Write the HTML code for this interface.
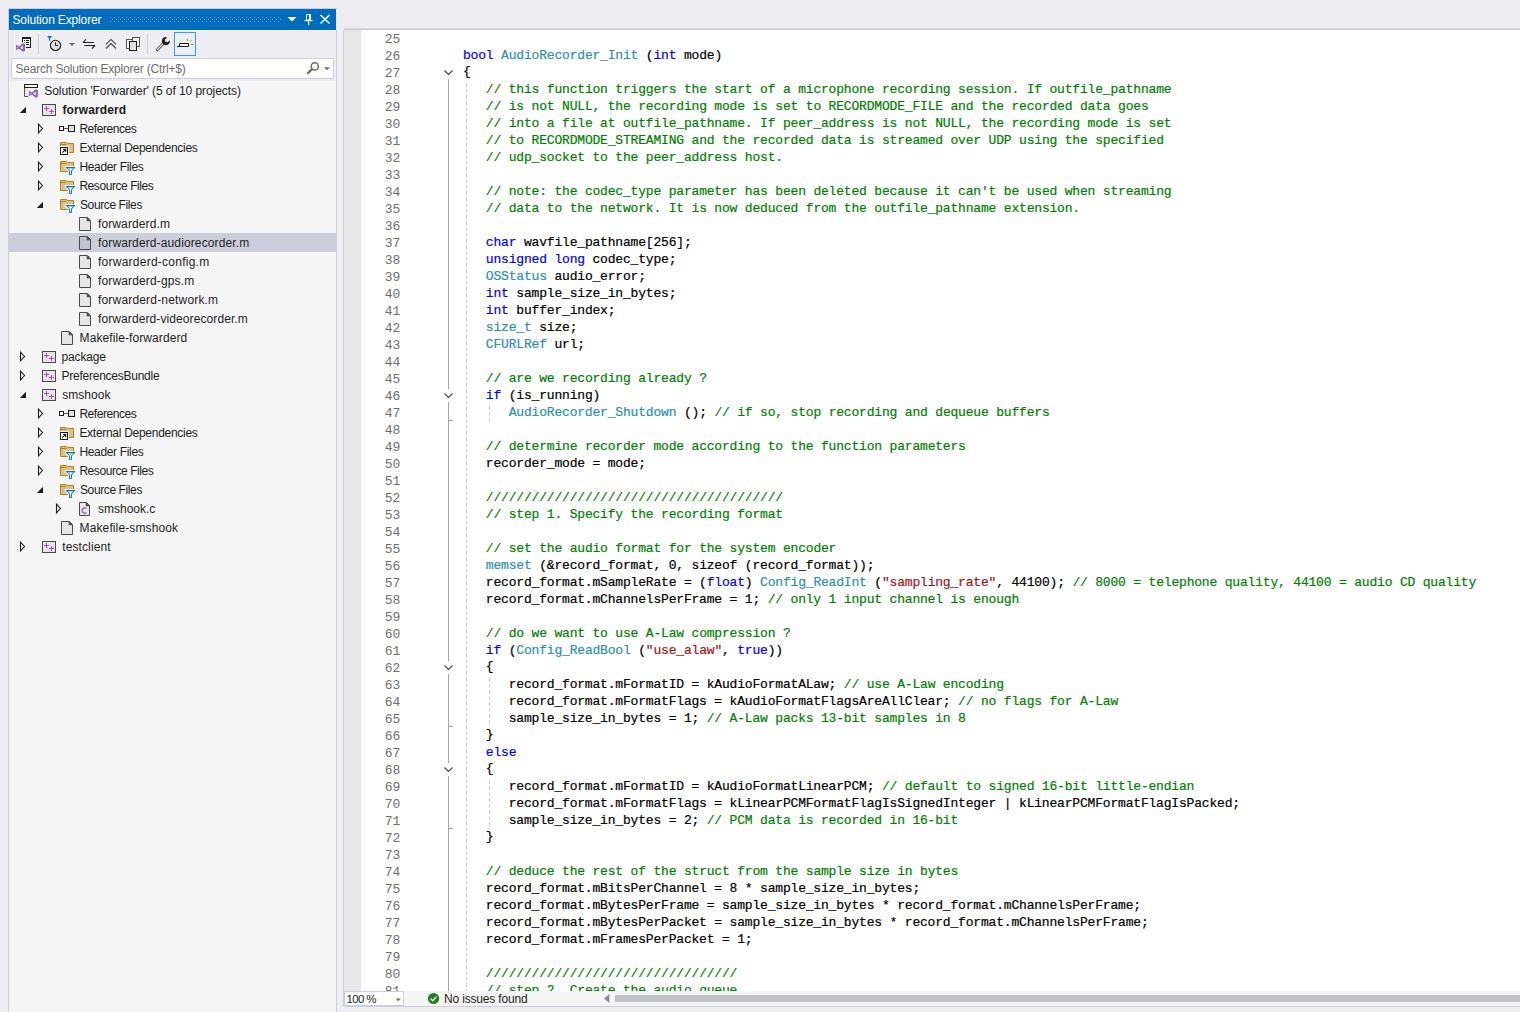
<!DOCTYPE html>
<html><head><meta charset="utf-8"><title>Solution Explorer</title>
<style>
html,body{margin:0;padding:0}
body{width:1520px;height:1012px;background:#eeeef2;position:relative;overflow:hidden;font-family:"Liberation Sans",sans-serif;font-size:12px;color:#1e1e1e}
.abs{position:absolute}
#panel{position:absolute;left:8px;top:8px;width:327px;height:1010px;border:1px solid #cccedb;background:#eeeef2}
#title{position:absolute;left:9px;top:9px;width:327px;height:21px;background:#006cbe}
#title .t{position:absolute;left:3.5px;top:1px;line-height:21px;color:#fff;white-space:pre}
#search{position:absolute;left:11px;top:58px;width:321px;height:19px;border:1px solid #cccedb;background:#fff}
#search .t{position:absolute;left:3.4px;top:1px;line-height:19px;color:#6d6d6d;white-space:pre}
#tree{position:absolute;left:9px;top:81px;width:327px;height:931px;background:#f5f5f5}
.row{position:absolute;left:0;width:327px;height:19px}
.row.sel{background:#cccedb}
.row .lbl{position:absolute;top:1px;line-height:18px;white-space:pre;color:#1e1e1e}
.row svg{position:absolute}
#edtop{position:absolute;left:344px;top:28px;width:1176px;height:2px;background:linear-gradient(#d6d7e4 0,#d6d7e4 50%,#c6c8da 50%,#c6c8da 100%)}
#edleft{position:absolute;left:343px;top:30px;width:1px;height:977px;background:#cccedb}
#edbg{position:absolute;left:344px;top:30px;width:1176px;height:961px;background:#fff;overflow:hidden}
#margin{position:absolute;left:0;top:0;width:17px;height:961px;background:#e6e7e8}
#bottombar{position:absolute;left:344px;top:991px;width:1176px;height:15px;background:#f5f5f5}
#edbot{position:absolute;left:343px;top:1006px;width:1177px;height:1px;background:#cccedb}
.ln,.cl{position:absolute;height:17px;line-height:17px;white-space:pre;font-family:"Liberation Mono",monospace;font-size:13px}
.ln{left:0;width:56px;text-align:right;color:#6e6e6e;letter-spacing:-0.2px}
.cl{left:119px;color:#000;letter-spacing:-0.1846px;-webkit-text-stroke:0.2px currentColor}
.k{color:#0000ff}.t{color:#2b91af}.c{color:#008000}.s{color:#a31515}
</style></head>
<body>
<div id="panel"></div><div class="abs" style="left:336px;top:9px;width:1px;height:21px;background:#eee8ee"></div>
<div id="title"><span class="t" style="letter-spacing:-0.149px">Solution Explorer</span><svg class="abs" style="left:0;top:0" width="327" height="21" viewBox="9 9 327 21"><defs><pattern id="grip" x="110" y="17" width="4" height="4" patternUnits="userSpaceOnUse"><rect x="0" y="0" width="1" height="1" fill="#59a8de"/><rect x="2" y="2" width="1" height="1" fill="#59a8de"/></pattern></defs><rect x="110" y="17" width="171" height="5" fill="url(#grip)"/><path d="M287.5 17 H296.5 L292 21.5 Z" fill="#fff"/><path d="M306.5 14.5 H310.5 V20 H306.5 Z" fill="none" stroke="#fff" stroke-width="1"/><rect x="309" y="14" width="1.5" height="6" fill="#fff"/><rect x="304.5" y="20" width="8" height="1.2" fill="#fff"/><rect x="308" y="21" width="1.2" height="4.2" fill="#fff"/><path d="M320.5 15 L329.5 23.4 M329.5 15 L320.5 23.4" stroke="#fff" stroke-width="1.4" fill="none"/></svg></div>
<svg class="abs" style="left:9px;top:30px" width="327" height="28" viewBox="9 30 327 28"><rect x="9" y="30" width="327" height="1" fill="#f7f3f1"/><path d="M22 37 H31 V48 H26 V47 H30 V39 H23 V43 H22 Z" fill="#1e1e1e"/><rect x="23" y="39" width="7" height="8" fill="#fff"/><rect x="24" y="40" width="1" height="1" fill="#1e1e1e"/><rect x="26" y="40" width="3" height="1" fill="#1e1e1e"/><rect x="24" y="42" width="1" height="1" fill="#555"/><rect x="26" y="42" width="3" height="1" fill="#1e1e1e"/><rect x="26" y="44" width="3" height="1" fill="#1e1e1e"/><rect x="15" y="42.5" width="11" height="10" fill="#eeeef2" opacity="0"/><g transform="translate(16 43.2) scale(1)"><path d="M6.9 0 L9 0.9 V7.7 L6.9 8.6 L2.9 5.2 L1 6.9 L0 6.4 V2.2 L1 1.7 L2.9 3.4 Z" fill="#eeeef2" stroke="#eeeef2" stroke-width="2"/><path d="M6.9 0 L9 0.9 V7.7 L6.9 8.6 L2.9 5.2 L1 6.9 L0 6.4 V2.2 L1 1.7 L2.9 3.4 Z M6.9 2.4 L4.3 4.3 L6.9 6.2 Z M1 3.3 V5.3 L2.1 4.3 Z" fill="#8661c5" fill-rule="evenodd"/></g><rect x="38" y="34" width="1" height="20" fill="#cccedb"/><rect x="147" y="34" width="1" height="20" fill="#cccedb"/><path d="M47 36 H52.2 L50.2 38.2 V40.8 H49 V38.2 Z" fill="#0b6cc2"/><circle cx="55.5" cy="45.4" r="5.1" fill="#e4e4e4" stroke="#1e1e1e" stroke-width="1.1"/><path d="M55.5 42.3 V45.6 H58.2" fill="none" stroke="#1e1e1e" stroke-width="1"/><path d="M69 43 H75 L72 46 Z" fill="#6d6d6d"/><path d="M86 39.3 L83.1 42.5 H94 M84.3 45.5 H95 L92 48.6" fill="none" stroke="#1e1e1e" stroke-width="1.1" stroke-linejoin="bevel"/><path d="M106 44.3 L111 39.4 L116 44.3 M106 48.5 L111 43.6 L116 48.5" fill="none" stroke="#424242" stroke-width="1.1"/><rect x="126.5" y="39.5" width="7" height="9" fill="#f4f4f4" stroke="#555" stroke-width="1"/><rect x="132.5" y="37.5" width="7" height="9" fill="#f0f0f0" stroke="#555" stroke-width="1"/><rect x="129.5" y="41.5" width="7" height="9" fill="#e2e2e2" stroke="#1e1e1e" stroke-width="1"/><path d="M157.3 49.7 L164 42.8" stroke="#4a4a4a" stroke-width="2.7" stroke-linecap="round" fill="none"/><path d="M157.4 49.6 L163.6 43.2" stroke="#f4f4f4" stroke-width="1.1" stroke-linecap="round" fill="none"/><path d="M167.2 37.2 A4.1 4.1 0 1 0 169.9 40.2 L167.6 42.3 L165.3 41.7 L164.9 39.5 Z" fill="#1e1e1e"/><rect x="174.5" y="32.5" width="21" height="23" fill="none" stroke="#3399ff" stroke-width="1"/><path d="M177 46.5 H188.5 V43.5 H179.5 V46.5" fill="#fff" stroke="#1e1e1e" stroke-width="1"/><path d="M187.5 39 V41 M190 41.6 L191.4 40.2 M191 44.5 H193.2" stroke="#b5830a" stroke-width="1" fill="none"/></svg>
<div id="search"><span class="t" style="letter-spacing:-0.188px">Search Solution Explorer (Ctrl+$)</span><svg class="abs" style="left:-1px;top:-1px" width="323" height="21" viewBox="11 58 323 21"><circle cx="314.8" cy="66.3" r="3.6" fill="none" stroke="#6d6d6d" stroke-width="1.5"/><path d="M312.2 69 L307.3 73.6" stroke="#6d6d6d" stroke-width="2.3" fill="none"/><path d="M324 67.2 H330 L327 70.2 Z" fill="#6d6d6d"/></svg></div>
<div id="tree">
<div class="row" style="top:0px"><svg style="left:14px;top:0" width="18" height="19" viewBox="0 0 18 19"><rect x="1.5" y="3.5" width="13" height="3" fill="#fff" stroke="#1e1e1e" stroke-width="1"/><rect x="2" y="7" width="12" height="8.5" fill="#e6e6e6"/><path d="M1.5 7 V15.5 H5" fill="none" stroke="#555" stroke-width="1"/><rect x="5.2" y="7.6" width="10.4" height="10" fill="#f5f5f5"/><g transform="translate(5.8 8.2) scale(1)"><path d="M6.9 0 L9 0.9 V7.7 L6.9 8.6 L2.9 5.2 L1 6.9 L0 6.4 V2.2 L1 1.7 L2.9 3.4 Z M6.9 2.4 L4.3 4.3 L6.9 6.2 Z M1 3.3 V5.3 L2.1 4.3 Z" fill="#8661c5" fill-rule="evenodd"/></g></svg><span class="lbl" id="r0" style="left:35.3px;letter-spacing:-0.072px">Solution &#39;Forwarder&#39; (5 of 10 projects)</span></div>
<div class="row" style="top:19px"><svg style="left:10px;top:0" width="9" height="19" viewBox="0 0 9 19"><path d="M7 6.8 V13 H0.8 Z" fill="#1e1e1e"/></svg><svg style="left:32px;top:0" width="18" height="19" viewBox="0 0 18 19"><rect x="1.5" y="4.5" width="13" height="11" fill="#e6e6e6" stroke="#4a4a4a" stroke-width="1"/><path d="M3 8.5 H8 M5.5 6 V11 M8 11.5 H13 M10.5 9 V14" stroke="#b146c2" stroke-width="1" fill="none"/></svg><span class="lbl" id="r1" style="left:53.5px;letter-spacing:0.112px;font-weight:bold">forwarderd</span></div>
<div class="row" style="top:38px"><svg style="left:28px;top:0" width="8" height="19" viewBox="0 0 8 19"><path d="M1.5 5.2 V13.8 L5.5 9.5 Z" fill="none" stroke="#1e1e1e" stroke-width="1.1"/></svg><svg style="left:49px;top:0" width="18" height="19" viewBox="0 0 18 19"><rect x="1.5" y="7.5" width="4" height="4" fill="#fff" stroke="#1e1e1e" stroke-width="1"/><rect x="6" y="9" width="4" height="1" fill="#555"/><rect x="10.5" y="6.5" width="6" height="6" fill="#e0e0e0" stroke="#1e1e1e" stroke-width="1"/></svg><span class="lbl" id="r2" style="left:70.4px;letter-spacing:-0.442px">References</span></div>
<div class="row" style="top:57px"><svg style="left:28px;top:0" width="8" height="19" viewBox="0 0 8 19"><path d="M1.5 5.2 V13.8 L5.5 9.5 Z" fill="none" stroke="#1e1e1e" stroke-width="1.1"/></svg><svg style="left:49px;top:0" width="18" height="19" viewBox="0 0 18 19"><path d="M2.5 4.5 H8.5 L9.5 5.5 H15.5 V14.5 H2.5 Z" fill="#dcc28a" stroke="#b5830a" stroke-width="1"/><path d="M3 6.5 H8.5" stroke="#b5830a" stroke-width="1"/><rect x="1" y="8" width="10" height="10" fill="#f5f5f5"/><rect x="2.5" y="9.5" width="7" height="7" fill="#fff" stroke="#1e1e1e" stroke-width="1"/><path d="M4.3 14.7 L7.6 11.4 M5 11.3 H7.7 V14" stroke="#1e1e1e" stroke-width="1.1" fill="none"/></svg><span class="lbl" id="r3" style="left:70.4px;letter-spacing:-0.284px">External Dependencies</span></div>
<div class="row" style="top:76px"><svg style="left:28px;top:0" width="8" height="19" viewBox="0 0 8 19"><path d="M1.5 5.2 V13.8 L5.5 9.5 Z" fill="none" stroke="#1e1e1e" stroke-width="1.1"/></svg><svg style="left:49px;top:0" width="19" height="19" viewBox="0 0 19 19"><path d="M2.5 4.5 H8.5 L9.5 5.5 H15.5 V14.5 H2.5 Z" fill="#dcc28a" stroke="#b5830a" stroke-width="1"/><path d="M3 6.5 H8.5" stroke="#b5830a" stroke-width="1"/><path d="M6.9 9 H18.1 V11.6 L14.9 14.6 V19 H10.1 V14.6 L6.9 11.6 Z" fill="#f5f5f5"/><rect x="14.6" y="9" width="3.4" height="7" fill="#f5f5f5"/><path d="M8.7 10.6 H16.3 L13.5 13.9 V17.5 H11.5 V13.9 Z" fill="#eef5fb" stroke="#0f73c9" stroke-width="1" stroke-linejoin="miter"/><path d="M7.9 10.6 H17.1" stroke="#0f73c9" stroke-width="1.3"/></svg><span class="lbl" id="r4" style="left:70.4px;letter-spacing:-0.330px">Header Files</span></div>
<div class="row" style="top:95px"><svg style="left:28px;top:0" width="8" height="19" viewBox="0 0 8 19"><path d="M1.5 5.2 V13.8 L5.5 9.5 Z" fill="none" stroke="#1e1e1e" stroke-width="1.1"/></svg><svg style="left:49px;top:0" width="19" height="19" viewBox="0 0 19 19"><path d="M2.5 4.5 H8.5 L9.5 5.5 H15.5 V14.5 H2.5 Z" fill="#dcc28a" stroke="#b5830a" stroke-width="1"/><path d="M3 6.5 H8.5" stroke="#b5830a" stroke-width="1"/><path d="M6.9 9 H18.1 V11.6 L14.9 14.6 V19 H10.1 V14.6 L6.9 11.6 Z" fill="#f5f5f5"/><rect x="14.6" y="9" width="3.4" height="7" fill="#f5f5f5"/><path d="M8.7 10.6 H16.3 L13.5 13.9 V17.5 H11.5 V13.9 Z" fill="#eef5fb" stroke="#0f73c9" stroke-width="1" stroke-linejoin="miter"/><path d="M7.9 10.6 H17.1" stroke="#0f73c9" stroke-width="1.3"/></svg><span class="lbl" id="r5" style="left:70.4px;letter-spacing:-0.433px">Resource Files</span></div>
<div class="row" style="top:114px"><svg style="left:27px;top:0" width="9" height="19" viewBox="0 0 9 19"><path d="M7 6.8 V13 H0.8 Z" fill="#1e1e1e"/></svg><svg style="left:49px;top:0" width="19" height="19" viewBox="0 0 19 19"><path d="M2.5 4.5 H8.5 L9.5 5.5 H15.5 V14.5 H2.5 Z" fill="#dcc28a" stroke="#b5830a" stroke-width="1"/><path d="M3 6.5 H8.5" stroke="#b5830a" stroke-width="1"/><path d="M6.9 9 H18.1 V11.6 L14.9 14.6 V19 H10.1 V14.6 L6.9 11.6 Z" fill="#f5f5f5"/><rect x="14.6" y="9" width="3.4" height="7" fill="#f5f5f5"/><path d="M8.7 10.6 H16.3 L13.5 13.9 V17.5 H11.5 V13.9 Z" fill="#eef5fb" stroke="#0f73c9" stroke-width="1" stroke-linejoin="miter"/><path d="M7.9 10.6 H17.1" stroke="#0f73c9" stroke-width="1.3"/></svg><span class="lbl" id="r6" style="left:71px;letter-spacing:-0.391px">Source Files</span></div>
<div class="row" style="top:133px"><svg style="left:69px;top:0" width="18" height="19" viewBox="0 0 18 19"><path d="M1.5 3.5 H9.5 L12.5 6.5 V16.5 H1.5 Z" fill="#e6e6e6" stroke="#4a4a4a" stroke-width="1"/><path d="M9 3.5 V7 H12.5" fill="#4a4a4a" stroke="#4a4a4a" stroke-width="0.6"/></svg><span class="lbl" id="r7" style="left:89px;letter-spacing:0.110px">forwarderd.m</span></div>
<div class="row sel" style="top:152px"><svg style="left:69px;top:0" width="18" height="19" viewBox="0 0 18 19"><path d="M1.5 3.5 H9.5 L12.5 6.5 V16.5 H1.5 Z" fill="#c3c4d2" stroke="#4a4a4a" stroke-width="1"/><path d="M9 3.5 V7 H12.5" fill="#4a4a4a" stroke="#4a4a4a" stroke-width="0.6"/></svg><span class="lbl" id="r8" style="left:89px;letter-spacing:0.125px">forwarderd-audiorecorder.m</span></div>
<div class="row" style="top:171px"><svg style="left:69px;top:0" width="18" height="19" viewBox="0 0 18 19"><path d="M1.5 3.5 H9.5 L12.5 6.5 V16.5 H1.5 Z" fill="#e6e6e6" stroke="#4a4a4a" stroke-width="1"/><path d="M9 3.5 V7 H12.5" fill="#4a4a4a" stroke="#4a4a4a" stroke-width="0.6"/></svg><span class="lbl" id="r9" style="left:89px;letter-spacing:0.249px">forwarderd-config.m</span></div>
<div class="row" style="top:190px"><svg style="left:69px;top:0" width="18" height="19" viewBox="0 0 18 19"><path d="M1.5 3.5 H9.5 L12.5 6.5 V16.5 H1.5 Z" fill="#e6e6e6" stroke="#4a4a4a" stroke-width="1"/><path d="M9 3.5 V7 H12.5" fill="#4a4a4a" stroke="#4a4a4a" stroke-width="0.6"/></svg><span class="lbl" id="r10" style="left:89px;letter-spacing:0.145px">forwarderd-gps.m</span></div>
<div class="row" style="top:209px"><svg style="left:69px;top:0" width="18" height="19" viewBox="0 0 18 19"><path d="M1.5 3.5 H9.5 L12.5 6.5 V16.5 H1.5 Z" fill="#e6e6e6" stroke="#4a4a4a" stroke-width="1"/><path d="M9 3.5 V7 H12.5" fill="#4a4a4a" stroke="#4a4a4a" stroke-width="0.6"/></svg><span class="lbl" id="r11" style="left:89px;letter-spacing:0.179px">forwarderd-network.m</span></div>
<div class="row" style="top:228px"><svg style="left:69px;top:0" width="18" height="19" viewBox="0 0 18 19"><path d="M1.5 3.5 H9.5 L12.5 6.5 V16.5 H1.5 Z" fill="#e6e6e6" stroke="#4a4a4a" stroke-width="1"/><path d="M9 3.5 V7 H12.5" fill="#4a4a4a" stroke="#4a4a4a" stroke-width="0.6"/></svg><span class="lbl" id="r12" style="left:89px;letter-spacing:0.096px">forwarderd-videorecorder.m</span></div>
<div class="row" style="top:247px"><svg style="left:51px;top:0" width="18" height="19" viewBox="0 0 18 19"><path d="M1.5 3.5 H9.5 L12.5 6.5 V16.5 H1.5 Z" fill="#e6e6e6" stroke="#4a4a4a" stroke-width="1"/><path d="M9 3.5 V7 H12.5" fill="#4a4a4a" stroke="#4a4a4a" stroke-width="0.6"/></svg><span class="lbl" id="r13" style="left:70.6px;letter-spacing:0.086px">Makefile-forwarderd</span></div>
<div class="row" style="top:266px"><svg style="left:10px;top:0" width="8" height="19" viewBox="0 0 8 19"><path d="M1.5 5.2 V13.8 L5.5 9.5 Z" fill="none" stroke="#1e1e1e" stroke-width="1.1"/></svg><svg style="left:32px;top:0" width="18" height="19" viewBox="0 0 18 19"><rect x="1.5" y="4.5" width="13" height="11" fill="#e6e6e6" stroke="#4a4a4a" stroke-width="1"/><path d="M3 8.5 H8 M5.5 6 V11 M8 11.5 H13 M10.5 9 V14" stroke="#b146c2" stroke-width="1" fill="none"/></svg><span class="lbl" id="r14" style="left:52.6px;letter-spacing:-0.163px">package</span></div>
<div class="row" style="top:285px"><svg style="left:10px;top:0" width="8" height="19" viewBox="0 0 8 19"><path d="M1.5 5.2 V13.8 L5.5 9.5 Z" fill="none" stroke="#1e1e1e" stroke-width="1.1"/></svg><svg style="left:32px;top:0" width="18" height="19" viewBox="0 0 18 19"><rect x="1.5" y="4.5" width="13" height="11" fill="#e6e6e6" stroke="#4a4a4a" stroke-width="1"/><path d="M3 8.5 H8 M5.5 6 V11 M8 11.5 H13 M10.5 9 V14" stroke="#b146c2" stroke-width="1" fill="none"/></svg><span class="lbl" id="r15" style="left:52.6px;letter-spacing:-0.255px">PreferencesBundle</span></div>
<div class="row" style="top:304px"><svg style="left:10px;top:0" width="9" height="19" viewBox="0 0 9 19"><path d="M7 6.8 V13 H0.8 Z" fill="#1e1e1e"/></svg><svg style="left:32px;top:0" width="18" height="19" viewBox="0 0 18 19"><rect x="1.5" y="4.5" width="13" height="11" fill="#e6e6e6" stroke="#4a4a4a" stroke-width="1"/><path d="M3 8.5 H8 M5.5 6 V11 M8 11.5 H13 M10.5 9 V14" stroke="#b146c2" stroke-width="1" fill="none"/></svg><span class="lbl" id="r16" style="left:53.2px;letter-spacing:0.061px">smshook</span></div>
<div class="row" style="top:323px"><svg style="left:28px;top:0" width="8" height="19" viewBox="0 0 8 19"><path d="M1.5 5.2 V13.8 L5.5 9.5 Z" fill="none" stroke="#1e1e1e" stroke-width="1.1"/></svg><svg style="left:49px;top:0" width="18" height="19" viewBox="0 0 18 19"><rect x="1.5" y="7.5" width="4" height="4" fill="#fff" stroke="#1e1e1e" stroke-width="1"/><rect x="6" y="9" width="4" height="1" fill="#555"/><rect x="10.5" y="6.5" width="6" height="6" fill="#e0e0e0" stroke="#1e1e1e" stroke-width="1"/></svg><span class="lbl" id="r17" style="left:70.4px;letter-spacing:-0.442px">References</span></div>
<div class="row" style="top:342px"><svg style="left:28px;top:0" width="8" height="19" viewBox="0 0 8 19"><path d="M1.5 5.2 V13.8 L5.5 9.5 Z" fill="none" stroke="#1e1e1e" stroke-width="1.1"/></svg><svg style="left:49px;top:0" width="18" height="19" viewBox="0 0 18 19"><path d="M2.5 4.5 H8.5 L9.5 5.5 H15.5 V14.5 H2.5 Z" fill="#dcc28a" stroke="#b5830a" stroke-width="1"/><path d="M3 6.5 H8.5" stroke="#b5830a" stroke-width="1"/><rect x="1" y="8" width="10" height="10" fill="#f5f5f5"/><rect x="2.5" y="9.5" width="7" height="7" fill="#fff" stroke="#1e1e1e" stroke-width="1"/><path d="M4.3 14.7 L7.6 11.4 M5 11.3 H7.7 V14" stroke="#1e1e1e" stroke-width="1.1" fill="none"/></svg><span class="lbl" id="r18" style="left:70.4px;letter-spacing:-0.284px">External Dependencies</span></div>
<div class="row" style="top:361px"><svg style="left:28px;top:0" width="8" height="19" viewBox="0 0 8 19"><path d="M1.5 5.2 V13.8 L5.5 9.5 Z" fill="none" stroke="#1e1e1e" stroke-width="1.1"/></svg><svg style="left:49px;top:0" width="19" height="19" viewBox="0 0 19 19"><path d="M2.5 4.5 H8.5 L9.5 5.5 H15.5 V14.5 H2.5 Z" fill="#dcc28a" stroke="#b5830a" stroke-width="1"/><path d="M3 6.5 H8.5" stroke="#b5830a" stroke-width="1"/><path d="M6.9 9 H18.1 V11.6 L14.9 14.6 V19 H10.1 V14.6 L6.9 11.6 Z" fill="#f5f5f5"/><rect x="14.6" y="9" width="3.4" height="7" fill="#f5f5f5"/><path d="M8.7 10.6 H16.3 L13.5 13.9 V17.5 H11.5 V13.9 Z" fill="#eef5fb" stroke="#0f73c9" stroke-width="1" stroke-linejoin="miter"/><path d="M7.9 10.6 H17.1" stroke="#0f73c9" stroke-width="1.3"/></svg><span class="lbl" id="r19" style="left:70.4px;letter-spacing:-0.330px">Header Files</span></div>
<div class="row" style="top:380px"><svg style="left:28px;top:0" width="8" height="19" viewBox="0 0 8 19"><path d="M1.5 5.2 V13.8 L5.5 9.5 Z" fill="none" stroke="#1e1e1e" stroke-width="1.1"/></svg><svg style="left:49px;top:0" width="19" height="19" viewBox="0 0 19 19"><path d="M2.5 4.5 H8.5 L9.5 5.5 H15.5 V14.5 H2.5 Z" fill="#dcc28a" stroke="#b5830a" stroke-width="1"/><path d="M3 6.5 H8.5" stroke="#b5830a" stroke-width="1"/><path d="M6.9 9 H18.1 V11.6 L14.9 14.6 V19 H10.1 V14.6 L6.9 11.6 Z" fill="#f5f5f5"/><rect x="14.6" y="9" width="3.4" height="7" fill="#f5f5f5"/><path d="M8.7 10.6 H16.3 L13.5 13.9 V17.5 H11.5 V13.9 Z" fill="#eef5fb" stroke="#0f73c9" stroke-width="1" stroke-linejoin="miter"/><path d="M7.9 10.6 H17.1" stroke="#0f73c9" stroke-width="1.3"/></svg><span class="lbl" id="r20" style="left:70.4px;letter-spacing:-0.433px">Resource Files</span></div>
<div class="row" style="top:399px"><svg style="left:27px;top:0" width="9" height="19" viewBox="0 0 9 19"><path d="M7 6.8 V13 H0.8 Z" fill="#1e1e1e"/></svg><svg style="left:49px;top:0" width="19" height="19" viewBox="0 0 19 19"><path d="M2.5 4.5 H8.5 L9.5 5.5 H15.5 V14.5 H2.5 Z" fill="#dcc28a" stroke="#b5830a" stroke-width="1"/><path d="M3 6.5 H8.5" stroke="#b5830a" stroke-width="1"/><path d="M6.9 9 H18.1 V11.6 L14.9 14.6 V19 H10.1 V14.6 L6.9 11.6 Z" fill="#f5f5f5"/><rect x="14.6" y="9" width="3.4" height="7" fill="#f5f5f5"/><path d="M8.7 10.6 H16.3 L13.5 13.9 V17.5 H11.5 V13.9 Z" fill="#eef5fb" stroke="#0f73c9" stroke-width="1" stroke-linejoin="miter"/><path d="M7.9 10.6 H17.1" stroke="#0f73c9" stroke-width="1.3"/></svg><span class="lbl" id="r21" style="left:71px;letter-spacing:-0.391px">Source Files</span></div>
<div class="row" style="top:418px"><svg style="left:46px;top:0" width="8" height="19" viewBox="0 0 8 19"><path d="M1.5 5.2 V13.8 L5.5 9.5 Z" fill="none" stroke="#1e1e1e" stroke-width="1.1"/></svg><svg style="left:69px;top:0" width="18" height="19" viewBox="0 0 18 19"><path d="M1.5 3.5 H8.5 L11.5 6.5 V16.5 H1.5 Z" fill="#e6e6e6" stroke="#4a4a4a" stroke-width="1"/><path d="M8 3.5 V7 H11.5" fill="#4a4a4a" stroke="#4a4a4a" stroke-width="0.6"/><path d="M8.4 9.6 A2.6 2.6 0 1 0 8.4 13.6" fill="none" stroke="#8a5cc8" stroke-width="1.3"/></svg><span class="lbl" id="r22" style="left:89px;letter-spacing:-0.007px">smshook.c</span></div>
<div class="row" style="top:437px"><svg style="left:51px;top:0" width="18" height="19" viewBox="0 0 18 19"><path d="M1.5 3.5 H9.5 L12.5 6.5 V16.5 H1.5 Z" fill="#e6e6e6" stroke="#4a4a4a" stroke-width="1"/><path d="M9 3.5 V7 H12.5" fill="#4a4a4a" stroke="#4a4a4a" stroke-width="0.6"/></svg><span class="lbl" id="r23" style="left:70.6px;letter-spacing:0.113px">Makefile-smshook</span></div>
<div class="row" style="top:456px"><svg style="left:10px;top:0" width="8" height="19" viewBox="0 0 8 19"><path d="M1.5 5.2 V13.8 L5.5 9.5 Z" fill="none" stroke="#1e1e1e" stroke-width="1.1"/></svg><svg style="left:32px;top:0" width="18" height="19" viewBox="0 0 18 19"><rect x="1.5" y="4.5" width="13" height="11" fill="#e6e6e6" stroke="#4a4a4a" stroke-width="1"/><path d="M3 8.5 H8 M5.5 6 V11 M8 11.5 H13 M10.5 9 V14" stroke="#b146c2" stroke-width="1" fill="none"/></svg><span class="lbl" id="r24" style="left:53.2px;letter-spacing:0.116px">testclient</span></div>
</div>
<div id="edtop"></div><div id="edleft"></div>
<div id="edbg"><div id="margin"></div>
<div class="ln" style="top:1px">25</div>
<div class="ln" style="top:18px">26</div><div class="cl" style="top:17px"><span class="k">bool</span> <span class="t">AudioRecorder_Init</span> (<span class="k">int</span> mode)</div>
<div class="ln" style="top:35px">27</div><div class="cl" style="top:33px">{</div>
<div class="ln" style="top:52px">28</div><div class="cl" style="top:51px">   <span class="c">// this function triggers the start of a microphone recording session. If outfile_pathname</span></div>
<div class="ln" style="top:69px">29</div><div class="cl" style="top:68px">   <span class="c">// is not NULL, the recording mode is set to RECORDMODE_FILE and the recorded data goes</span></div>
<div class="ln" style="top:86px">30</div><div class="cl" style="top:85px">   <span class="c">// into a file at outfile_pathname. If peer_address is not NULL, the recording mode is set</span></div>
<div class="ln" style="top:103px">31</div><div class="cl" style="top:102px">   <span class="c">// to RECORDMODE_STREAMING and the recorded data is streamed over UDP using the specified</span></div>
<div class="ln" style="top:120px">32</div><div class="cl" style="top:119px">   <span class="c">// udp_socket to the peer_address host.</span></div>
<div class="ln" style="top:137px">33</div>
<div class="ln" style="top:154px">34</div><div class="cl" style="top:153px">   <span class="c">// note: the codec_type parameter has been deleted because it can't be used when streaming</span></div>
<div class="ln" style="top:171px">35</div><div class="cl" style="top:170px">   <span class="c">// data to the network. It is now deduced from the outfile_pathname extension.</span></div>
<div class="ln" style="top:188px">36</div>
<div class="ln" style="top:205px">37</div><div class="cl" style="top:204px">   <span class="k">char</span> wavfile_pathname[256];</div>
<div class="ln" style="top:222px">38</div><div class="cl" style="top:221px">   <span class="k">unsigned</span> <span class="k">long</span> codec_type;</div>
<div class="ln" style="top:239px">39</div><div class="cl" style="top:238px">   <span class="t">OSStatus</span> audio_error;</div>
<div class="ln" style="top:256px">40</div><div class="cl" style="top:255px">   <span class="k">int</span> sample_size_in_bytes;</div>
<div class="ln" style="top:273px">41</div><div class="cl" style="top:272px">   <span class="k">int</span> buffer_index;</div>
<div class="ln" style="top:290px">42</div><div class="cl" style="top:289px">   <span class="t">size_t</span> size;</div>
<div class="ln" style="top:307px">43</div><div class="cl" style="top:306px">   <span class="t">CFURLRef</span> url;</div>
<div class="ln" style="top:324px">44</div>
<div class="ln" style="top:341px">45</div><div class="cl" style="top:340px">   <span class="c">// are we recording already ?</span></div>
<div class="ln" style="top:358px">46</div><div class="cl" style="top:357px">   <span class="k">if</span> (is_running)</div>
<div class="ln" style="top:375px">47</div><div class="cl" style="top:374px">      <span class="t">AudioRecorder_Shutdown</span> (); <span class="c">// if so, stop recording and dequeue buffers</span></div>
<div class="ln" style="top:392px">48</div>
<div class="ln" style="top:409px">49</div><div class="cl" style="top:408px">   <span class="c">// determine recorder mode according to the function parameters</span></div>
<div class="ln" style="top:426px">50</div><div class="cl" style="top:425px">   recorder_mode = mode;</div>
<div class="ln" style="top:443px">51</div>
<div class="ln" style="top:460px">52</div><div class="cl" style="top:459px">   <span class="c">///////////////////////////////////////</span></div>
<div class="ln" style="top:477px">53</div><div class="cl" style="top:476px">   <span class="c">// step 1. Specify the recording format</span></div>
<div class="ln" style="top:494px">54</div>
<div class="ln" style="top:511px">55</div><div class="cl" style="top:510px">   <span class="c">// set the audio format for the system encoder</span></div>
<div class="ln" style="top:528px">56</div><div class="cl" style="top:527px">   <span class="t">memset</span> (&amp;record_format, 0, sizeof (record_format));</div>
<div class="ln" style="top:545px">57</div><div class="cl" style="top:544px">   record_format.mSampleRate = (<span class="k">float</span>) <span class="t">Config_ReadInt</span> (<span class="s">"sampling_rate"</span>, 44100); <span class="c">// 8000 = telephone quality, 44100 = audio CD quality</span></div>
<div class="ln" style="top:562px">58</div><div class="cl" style="top:561px">   record_format.mChannelsPerFrame = 1; <span class="c">// only 1 input channel is enough</span></div>
<div class="ln" style="top:579px">59</div>
<div class="ln" style="top:596px">60</div><div class="cl" style="top:595px">   <span class="c">// do we want to use A-Law compression ?</span></div>
<div class="ln" style="top:613px">61</div><div class="cl" style="top:612px">   <span class="k">if</span> (<span class="t">Config_ReadBool</span> (<span class="s">"use_alaw"</span>, <span class="k">true</span>))</div>
<div class="ln" style="top:630px">62</div><div class="cl" style="top:628px">   {</div>
<div class="ln" style="top:647px">63</div><div class="cl" style="top:646px">      record_format.mFormatID = kAudioFormatALaw; <span class="c">// use A-Law encoding</span></div>
<div class="ln" style="top:664px">64</div><div class="cl" style="top:663px">      record_format.mFormatFlags = kAudioFormatFlagsAreAllClear; <span class="c">// no flags for A-Law</span></div>
<div class="ln" style="top:681px">65</div><div class="cl" style="top:680px">      sample_size_in_bytes = 1; <span class="c">// A-Law packs 13-bit samples in 8</span></div>
<div class="ln" style="top:698px">66</div><div class="cl" style="top:696px">   }</div>
<div class="ln" style="top:715px">67</div><div class="cl" style="top:714px">   <span class="k">else</span></div>
<div class="ln" style="top:732px">68</div><div class="cl" style="top:730px">   {</div>
<div class="ln" style="top:749px">69</div><div class="cl" style="top:748px">      record_format.mFormatID = kAudioFormatLinearPCM; <span class="c">// default to signed 16-bit little-endian</span></div>
<div class="ln" style="top:766px">70</div><div class="cl" style="top:765px">      record_format.mFormatFlags = kLinearPCMFormatFlagIsSignedInteger | kLinearPCMFormatFlagIsPacked;</div>
<div class="ln" style="top:783px">71</div><div class="cl" style="top:782px">      sample_size_in_bytes = 2; <span class="c">// PCM data is recorded in 16-bit</span></div>
<div class="ln" style="top:800px">72</div><div class="cl" style="top:798px">   }</div>
<div class="ln" style="top:817px">73</div>
<div class="ln" style="top:834px">74</div><div class="cl" style="top:833px">   <span class="c">// deduce the rest of the struct from the sample size in bytes</span></div>
<div class="ln" style="top:851px">75</div><div class="cl" style="top:850px">   record_format.mBitsPerChannel = 8 * sample_size_in_bytes;</div>
<div class="ln" style="top:868px">76</div><div class="cl" style="top:867px">   record_format.mBytesPerFrame = sample_size_in_bytes * record_format.mChannelsPerFrame;</div>
<div class="ln" style="top:885px">77</div><div class="cl" style="top:884px">   record_format.mBytesPerPacket = sample_size_in_bytes * record_format.mChannelsPerFrame;</div>
<div class="ln" style="top:902px">78</div><div class="cl" style="top:901px">   record_format.mFramesPerPacket = 1;</div>
<div class="ln" style="top:919px">79</div>
<div class="ln" style="top:936px">80</div><div class="cl" style="top:935px">   <span class="c">/////////////////////////////////</span></div>
<div class="ln" style="top:953px">81</div><div class="cl" style="top:952px">   <span class="c">// step 2. Create the audio queue</span></div>
<svg class="abs" style="left:0;top:0" width="200" height="961" viewBox="0 0 200 961"><rect x="104" y="49" width="1" height="310" fill="#a5a5a5"/><rect x="104" y="372" width="1" height="259" fill="#a5a5a5"/><rect x="104" y="644" width="1" height="89" fill="#a5a5a5"/><rect x="104" y="746" width="1" height="215" fill="#a5a5a5"/><rect x="104" y="390" width="5" height="1" fill="#a5a5a5"/><rect x="104" y="696" width="5" height="1" fill="#a5a5a5"/><rect x="104" y="798" width="5" height="1" fill="#a5a5a5"/><path d="M100.5 40.5 l4 4 l4 -4" fill="none" stroke="#424242" stroke-width="1.1"/><path d="M100.5 363.5 l4 4 l4 -4" fill="none" stroke="#424242" stroke-width="1.1"/><path d="M100.5 635.5 l4 4 l4 -4" fill="none" stroke="#424242" stroke-width="1.1"/><path d="M100.5 737.5 l4 4 l4 -4" fill="none" stroke="#424242" stroke-width="1.1"/><path d="M122.5 53 V961" stroke="#cbcbcb" stroke-width="1" stroke-dasharray="4 2" fill="none"/><path d="M145.5 376 V391" stroke="#cbcbcb" stroke-width="1" stroke-dasharray="4 2" fill="none"/><path d="M145.5 648 V697" stroke="#cbcbcb" stroke-width="1" stroke-dasharray="4 2" fill="none"/><path d="M145.5 750 V799" stroke="#cbcbcb" stroke-width="1" stroke-dasharray="4 2" fill="none"/></svg>
</div>
<div id="bottombar"><svg class="abs" style="left:0;top:0" width="1176" height="15" viewBox="344 991 1176 15"><rect x="344.5" y="991.5" width="59" height="14" fill="#fff" stroke="#cccedb" stroke-width="1"/><path d="M395.5 998.4 H401 L398.2 1001.2 Z" fill="#6d6d6d"/><circle cx="433.5" cy="998.5" r="5.6" fill="#1f831f"/><path d="M430.6 998.6 L432.7 1000.7 L436.4 996.6" fill="none" stroke="#fff" stroke-width="1.3"/><path d="M609.3 994 V1003 L604 998.5 Z" fill="#868999"/><rect x="615" y="995" width="905" height="7" fill="#c2c3c9"/></svg><span class="abs" style="left:2.5px;top:1px;line-height:15px;white-space:pre;font-size:11.5px;letter-spacing:-0.677px">100 %</span><span class="abs" style="left:100px;top:1px;line-height:15px;white-space:pre;letter-spacing:-0.176px">No issues found</span></div><div id="edbot"></div>
</body></html>
